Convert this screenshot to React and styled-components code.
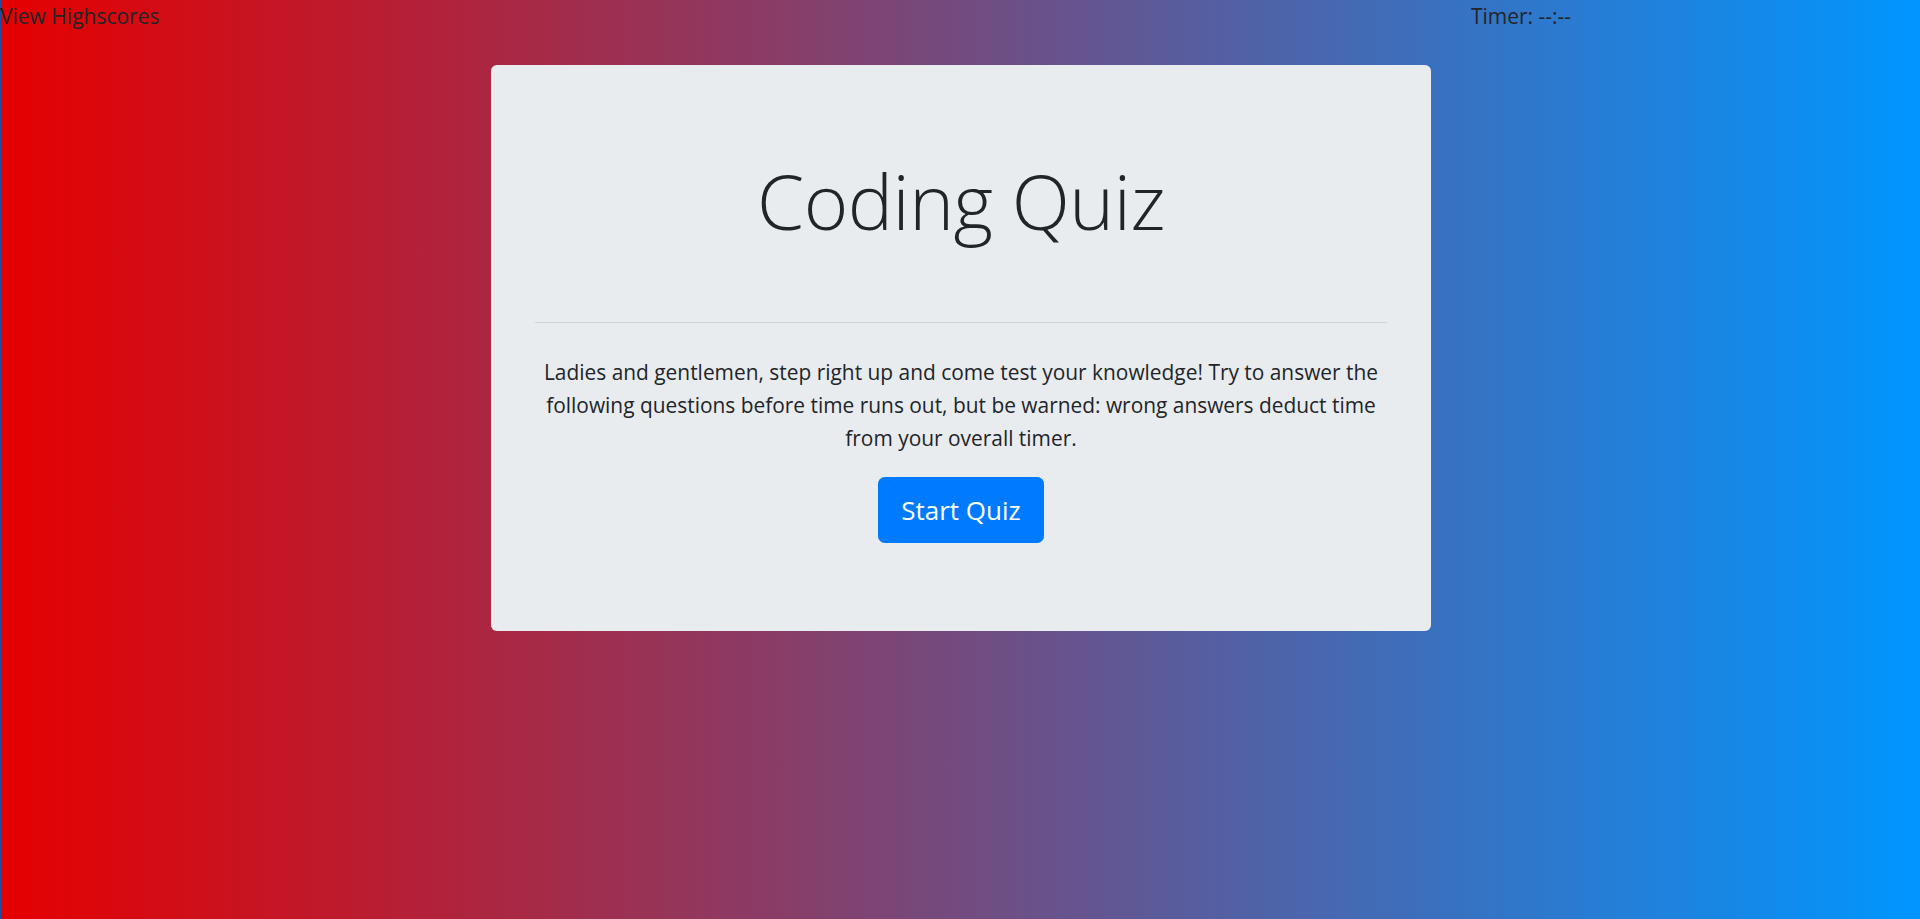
import React from "react";
import styled, { createGlobalStyle } from "styled-components";

const GlobalStyle = createGlobalStyle`
  *, *::before, *::after { box-sizing: border-box; }
  html, body { margin: 0; padding: 0; }
  body {
    font-family: "Open Sans", "Noto Sans", sans-serif;
    font-size: 22px;
    line-height: 1.5;
    color: #212529;
  }
`;

const Page = styled.div`
  min-height: 100vh;
  padding-left: 2px;
  background:
    linear-gradient(to right, #1f4fa3 0, #1f4fa3 1px, transparent 1px),
    linear-gradient(to right, #e60000 0%, #0096ff 100%);
  overflow: hidden;
`;

const TopBar = styled.div`
  display: grid;
  grid-template-columns: 9fr 3fr;
  margin: 0 -20.6px 0 -22.6px;
`;

const TopCol = styled.div`
  padding: 0 20.6px;
  font-size: 21px;
  line-height: 33px;
  color: #212529;
`;

const HighscoreLink = styled.a`
  color: #212529;
  text-decoration: none;
  cursor: pointer;
`;

const Jumbotron = styled.section`
  width: 940px;
  margin: 32px auto 0;
  padding: 88px 44px;
  background: #e9ecef;
  border-radius: 6px;
  text-align: center;
`;

const Title = styled.h1`
  margin: 0;
  font-size: 76px;
  font-weight: 300;
  line-height: 92px;
  letter-spacing: -0.5px;
  padding-top: 2px;
`;

const Divider = styled.hr`
  margin: 75px 0 33px;
  border: 0;
  border-top: 1px solid rgba(0, 0, 0, 0.1);
`;

const Intro = styled.p`
  margin: 0 0 22px;
  font-size: 20.9px;
  line-height: 33px;
`;

const StartButton = styled.button`
  display: inline-block;
  font-family: inherit;
  font-size: 26px;
  line-height: 42px;
  padding: 11px 22px;
  color: #fff;
  background: #007bff;
  border: 1px solid #007bff;
  border-radius: 6.6px;
  cursor: pointer;
`;

export default function App() {
  return (
    <>
      <GlobalStyle />
      <Page>
        <TopBar>
          <TopCol>
            <HighscoreLink>View Highscores</HighscoreLink>
          </TopCol>
          <TopCol>Timer: --:--</TopCol>
        </TopBar>
        <Jumbotron>
          <Title>Coding Quiz</Title>
          <Divider />
          <Intro>
            Ladies and gentlemen, step right up and come test your knowledge! Try to answer the
            following questions before time runs out, but be warned: wrong answers deduct time
            from your overall timer.
          </Intro>
          <StartButton>Start Quiz</StartButton>
        </Jumbotron>
      </Page>
    </>
  );
}
